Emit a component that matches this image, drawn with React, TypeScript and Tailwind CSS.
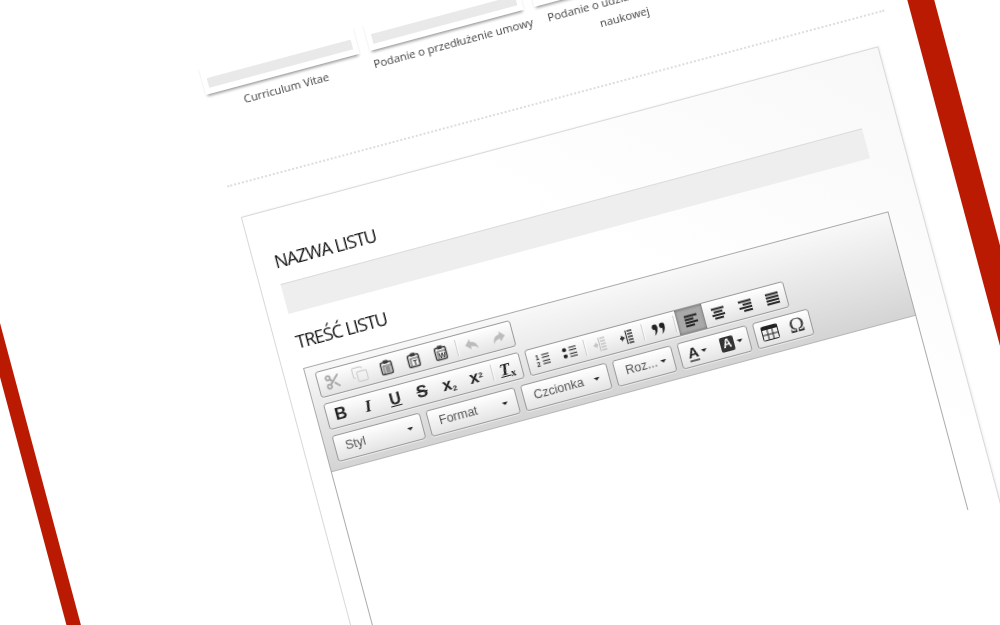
import React from "react";
import { Scissors, Copy } from "lucide-react";

const Lines = ({ kind }: { kind: "l" | "c" | "r" | "j" }) => {
  const short = kind === "l" ? [1, 10] : kind === "r" ? [5, 14] : kind === "c" ? [3, 12] : [1, 14];
  const rows = [[1, 14], short, [1, 14], short];
  return (
    <svg width="15" height="16" viewBox="0 0 15 16">
      {rows.map(([a, b], i) => (
        <rect key={i} x={a} y={2.5 + i * 3.2} width={b - a} height="2" fill="#222" />
      ))}
    </svg>
  );
};

const Paste = ({ letter }: { letter: string }) => (
  <svg width="16" height="17" viewBox="0 0 16 16" fill="none">
    <rect x="2.5" y="3" width="11" height="12" rx="1.5" stroke="#3c3c3c" strokeWidth="1.5" />
    <rect x="5.5" y="1" width="5" height="3.500" rx="1" fill="#3c3c3c" />
    <rect x="5" y="6.500" width="8" height="8" fill="#f4f4f4" stroke="#555" strokeWidth="1" />
    {letter === "" ? (
      <path d="M6.500 8.500h5M6.500 10.500h5M6.500 12.500h5" stroke="#333" />
    ) : (
      <text x="9" y="13.400" textAnchor="middle" fontSize="7.500" fontWeight="700" fontFamily="Liberation Sans" fill="#333">
        {letter}
      </text>
    )}
  </svg>
);

const Arrow = ({ flip }: { flip?: boolean }) => (
  <svg width="16" height="16" viewBox="0 0 16 16" style={flip ? { transform: "scaleX(-1)" } : undefined}>
    <path d="M7 2 1.500 7.500 7 12.500V9.500c3 0 5.500 1 7 4 0-5-2.500-8-7-8.500z" fill="#bcbcbc" />
  </svg>
);

const ListIcon = ({ numbered }: { numbered?: boolean }) => (
  <svg width="15" height="15" viewBox="0 0 16 16">
    {numbered ? (
      <>
        <text x="1" y="7" fontSize="7" fontWeight="700" fontFamily="Liberation Sans" fill="#222">1</text>
        <text x="1" y="14.500" fontSize="7" fontWeight="700" fontFamily="Liberation Sans" fill="#222">2</text>
      </>
    ) : (
      <>
        <circle cx="3" cy="4.500" r="2.200" fill="#222" />
        <circle cx="3" cy="11.500" r="2.200" fill="#222" />
      </>
    )}
    <path d="M8 3h8M8 6h8M8 10h8M8 13h8" stroke="#444" strokeWidth="1.300" />
  </svg>
);

const Indent = ({ out }: { out?: boolean }) => {
  const c = out ? "#c4c4c4" : "#333";
  return (
    <svg width="16" height="16" viewBox="0 0 16 16">
      <path d="M9 2h5M9 5h5M9 8h5M9 11h5M9 14h5" stroke={c} strokeWidth="1.300" />
      <path d="M7.500 1v14" stroke={c} strokeWidth="1.200" />
      <path d={out ? "M1 8l4-3v2h1v2H5v2z" : "M6 8 2 5v2H1v2h1v2z"} fill={c} />
    </svg>
  );
};

const Quote = () => (
  <svg width="16" height="16" viewBox="0 0 16 16" fill="#222">
    <circle cx="4" cy="5.500" r="2.700" />
    <path d="M6.700 5.500C7 9 5.500 12.500 2.500 14c1.200-2 1.500-4 1.500-6z" />
    <circle cx="11.500" cy="5.500" r="2.700" />
    <path d="M14.200 5.500C14.500 9 13 12.500 10 14c1.200-2 1.500-4 1.500-6z" />
  </svg>
);

const Tri = () => <span className="ml-[3px] h-0 w-0 border-x-[3px] border-t-[3px] border-x-transparent border-t-[#222]" />;

const Btn = ({ children, active }: { children: React.ReactNode; active?: boolean }) => (
  <div
    className={
      active
        ? "flex h-full w-[28px] items-center justify-center bg-[#a9a9a9] shadow-[inset_0_0_3px_rgba(0,0,0,0.5)]"
        : "flex h-full w-[28px] items-center justify-center"
    }
  >
    {children}
  </div>
);

const Sep = ({ wide }: { wide?: boolean }) => (
  <div
    className={
      wide
        ? "mx-[2px] my-[4px] w-px bg-[#d0d0d0] shadow-[1px_0_0_rgba(255,255,255,0.7)]"
        : "mx-[1.500px] my-[4px] w-px bg-[#d0d0d0] shadow-[1px_0_0_rgba(255,255,255,0.7)]"
    }
  />
);

const Group = ({ children, w }: { children: React.ReactNode; w?: string }) => (
  <div
    className={`flex h-[27px] shrink-0 items-stretch rounded-[3px] border border-[#999] bg-linear-to-b from-white to-[#e4e4e4] shadow-[0_1px_0_rgba(255,255,255,0.5)] ${w ?? ""}`}
  >
    {children}
  </div>
);

const Combo = ({ label, w }: { label: string; w: string }) => (
  <div
    className={`flex h-[27px] shrink-0 items-center justify-between rounded-[3px] border border-[#999] bg-linear-to-b from-white to-[#e4e4e4] pl-[10px] pr-[9px] font-['Liberation_Sans',sans-serif] text-[12.500px] text-[#555] shadow-[0_1px_0_rgba(255,255,255,0.5)] ${w}`}
  >
    <span>{label}</span>
    <Tri />
  </div>
);

const Glyph = ({ children, cls }: { children: React.ReactNode; cls: string }) => (
  <span className={`font-['Liberation_Sans',sans-serif] leading-none text-[#222] ${cls}`}>{children}</span>
);

const Thumb = ({ children, labelCls }: { children: React.ReactNode; labelCls?: string }) => (
  <div className="flex w-[159px] shrink-0 flex-col">
    <div className="flex h-[30px] flex-col justify-end bg-white px-[5px] pb-[6px] shadow-[0_3px_3px_-1px_rgba(0,0,0,0.45)]">
      <div className="h-[10px] bg-[#e9e9e9]" />
    </div>
    <div className={`mt-[5px] whitespace-nowrap text-center font-['Open_Sans',sans-serif] text-[11.300px] leading-[18.500px] text-[#3f3f3f] ${labelCls ?? ""}`}>
      {children}
    </div>
  </div>
);

export default function App() {
  return (
    <div className="relative h-[625px] w-[1000px] overflow-hidden bg-white">
      <div className="h-[1100px] w-[1000px] origin-top-left border-x-0 border-l-[14px] border-r-[26px] border-solid border-l-[#ba1a02] border-r-[#ba1a02] bg-white pt-[215px] blur-[0.35px] [transform:rotate(-15deg)_translate(-97.600px,-100px)]">
        <div className="ml-[255px] w-[680px]">
          <div className="flex gap-[11px] pl-[3px]">
            <Thumb>Curriculum Vitae</Thumb>
            <Thumb>Podanie o przedłużenie umowy</Thumb>
            <Thumb labelCls="pl-[10px]">
              Podanie o udział w konferencji
              <br />
              naukowej
            </Thumb>
          </div>
          <div className="mt-[51px] border-t-2 border-dotted border-[#dddddd]" />
          <div className="ml-[5px] mt-[32px] h-[620px] w-[660px] border border-[#d8d8d8] bg-linear-to-bl from-[#f8f8f8] via-white via-35% to-white pl-[20px] pt-[39px] shadow-[1px_0_3px_rgba(0,0,0,0.08)]">
            <div className="font-['Open_Sans',sans-serif] text-[18px] leading-[24px] tracking-[-0.95px] text-[#111]">NAZWA LISTU</div>
            <div className="mt-[11px] h-[31px] w-[602px] border-t border-[#dadada] bg-[#eeeeee]" />
            <div className="mt-[17px] font-['Open_Sans',sans-serif] text-[18px] leading-[24px] tracking-[-0.95px] text-[#111]">TREŚĆ LISTU</div>
            <div className="mt-[15px] h-[420px] w-[606px] border border-[#aaaaaa] bg-white">
              <div className="flex h-[107px] flex-col gap-[6px] border-b border-[#b6b6b6] bg-linear-to-b from-[#f8f8f8] to-[#d4d4d4] pl-[9px] pt-[6px]">
                <div className="flex gap-[6px]">
                  <Group>
                    <Btn><Scissors size={17} color="#a8a8a8" strokeWidth={2.6} /></Btn>
                    <Btn><Copy size={17} color="#cecece" strokeWidth={1.6} /></Btn>
                    <Btn><Paste letter="" /></Btn>
                    <Btn><Paste letter="T" /></Btn>
                    <Btn><Paste letter="W" /></Btn>
                    <Sep />
                    <Btn><Arrow /></Btn>
                    <Btn><Arrow flip /></Btn>
                  </Group>
                </div>
                <div className="flex gap-[6px]">
                  <Group>
                    <Btn><Glyph cls="text-[17px] font-bold">B</Glyph></Btn>
                    <Btn><span className="font-['Liberation_Serif',serif] text-[17px] font-bold italic leading-none text-[#222]">I</span></Btn>
                    <Btn><Glyph cls="text-[16px] font-bold underline">U</Glyph></Btn>
                    <Btn><Glyph cls="text-[17px] font-bold line-through">S</Glyph></Btn>
                    <Btn><Glyph cls="text-[17px] font-bold">x<sub className="text-[8px]">2</sub></Glyph></Btn>
                    <Btn><Glyph cls="text-[17px] font-bold">x<sup className="text-[8px]">2</sup></Glyph></Btn>
                    <Sep />
                    <Btn><span className="font-['Liberation_Serif',serif] text-[17px] font-bold italic leading-none text-[#222] underline">T<sub className="text-[10px] not-italic">x</sub></span></Btn>
                  </Group>
                  <Group>
                    <Btn><ListIcon numbered /></Btn>
                    <Btn><ListIcon /></Btn>
                    <Sep />
                    <Btn><Indent out /></Btn>
                    <Btn><Indent /></Btn>
                    <Sep wide />
                    <Btn><Quote /></Btn>
                    <Sep wide />
                    <Btn active><Lines kind="l" /></Btn>
                    <Btn><Lines kind="c" /></Btn>
                    <Btn><Lines kind="r" /></Btn>
                    <Btn><Lines kind="j" /></Btn>
                  </Group>
                </div>
                <div className="flex gap-[6px]">
                  <Combo label="Styl" w="w-[91px]" />
                  <Combo label="Format" w="w-[92px]" />
                  <Combo label="Czcionka" w="w-[89px]" />
                  <Combo label="Roz..." w="w-[61px]" />
                  <Group w="w-[72px]">
                    <div className="flex w-[35px] items-center justify-center">
                      <span className="border-b-2 border-[#666] font-['Liberation_Sans',sans-serif] text-[15px] font-bold leading-[14px] text-[#222]">A</span>
                      <Tri />
                    </div>
                    <div className="flex w-[35px] items-center justify-center">
                      <span className="rounded-[2px] bg-[#333] px-[3px] font-['Liberation_Sans',sans-serif] text-[12px] font-bold leading-[15px] text-white">A</span>
                      <Tri />
                    </div>
                  </Group>
                  <Group w="w-[58px]">
                    <Btn>
                      <svg width="17" height="15" viewBox="0 0 17 15" fill="none" stroke="#222">
                        <rect x="0.500" y="0.500" width="16" height="14" rx="1" />
                        <path d="M0 2.500h17" strokeWidth="3" />
                        <path d="M0 9h17M6 3v12M11 3v12" />
                      </svg>
                    </Btn>
                    <Btn><span className="font-['Liberation_Serif',serif] text-[21px] leading-none text-[#333]">Ω</span></Btn>
                  </Group>
                </div>
              </div>
            </div>
          </div>
        </div>
      </div>
      <div className="absolute bottom-0 right-0 h-[115px] w-[300px] bg-white" />
    </div>
  );
}
